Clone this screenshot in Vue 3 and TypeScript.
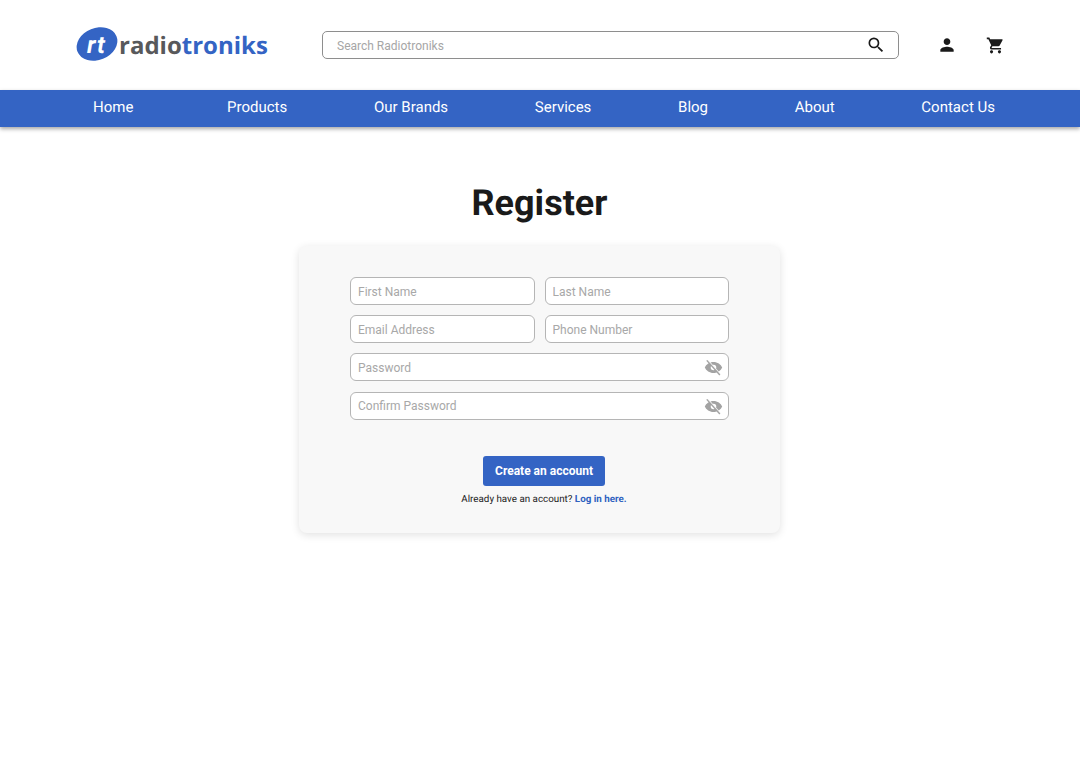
<script setup lang="ts">
const menu = ['Home', 'Products', 'Our Brands', 'Services', 'Blog', 'About', 'Contact Us']
const pairs = [
  ['First Name', 'Last Name'],
  ['Email Address', 'Phone Number'],
]
const secrets = ['Password', 'Confirm Password']
</script>

<template>
  <div class="page">
    <header class="top">
      <a class="logo" href="#">
        <svg class="mark" viewBox="0 0 42 34" width="42" height="34">
          <ellipse cx="21" cy="17" rx="21" ry="16" transform="rotate(-22 21 17)" fill="#3464c4" />
          <text x="11" y="26" class="mark-text">rt</text>
        </svg>
        <span class="word">radio<b>troniks</b></span>
      </a>
      <div class="search">
        <input type="text" placeholder="Search Radiotroniks" />
        <svg viewBox="0 0 24 24" width="20" height="20">
          <path d="M15.500 14h-.79l-.28-.27A6.470 6.470 0 0 0 16 9.500 6.500 6.500 0 1 0 9.500 16c1.610 0 3.090-.59 4.230-1.570l.27.28v.79l5 4.990L20.490 19l-4.990-5zm-6 0C7.010 14 5 11.990 5 9.500S7.010 5 9.500 5 14 7.010 14 9.500 11.990 14 9.500 14z" />
        </svg>
      </div>
      <div class="actions">
        <svg viewBox="0 0 24 24" width="20" height="20">
          <path d="M12 12c2.210 0 4-1.790 4-4s-1.790-4-4-4-4 1.790-4 4 1.790 4 4 4zm0 2c-2.670 0-8 1.340-8 4v2h16v-2c0-2.660-5.330-4-8-4z" />
        </svg>
        <svg viewBox="0 0 24 24" width="19" height="19">
          <path d="M7 18c-1.100 0-1.990.9-1.990 2S5.900 22 7 22s2-.9 2-2-.9-2-2-2zM1 2v2h2l3.600 7.590-1.350 2.450c-.160.280-.250.610-.250.960 0 1.100.9 2 2 2h12v-2H7.420c-.140 0-.250-.110-.250-.250l.030-.120.9-1.630h7.450c.750 0 1.410-.410 1.750-1.030l3.580-6.490A1 1 0 0 0 20 4H5.210l-.940-2H1zm16 16c-1.100 0-1.990.9-1.990 2s.890 2 1.990 2 2-.9 2-2-.9-2-2-2z" />
        </svg>
      </div>
    </header>

    <nav class="menu">
      <a v-for="item in menu" :key="item" href="#">{{ item }}</a>
    </nav>

    <main class="content">
      <h1>Register</h1>
      <form class="card" @submit.prevent>
        <div v-for="(row, i) in pairs" :key="i" class="row">
          <input v-for="name in row" :key="name" type="text" :placeholder="name" />
        </div>
        <div v-for="name in secrets" :key="name" class="secret">
          <input type="password" :placeholder="name" />
          <svg viewBox="0 0 24 24" width="19" height="19">
            <path d="M12 5C7 5 2.700 8.100 1 12c1.700 3.900 6 7 11 7s9.300-3.100 11-7c-1.700-3.900-6-7-11-7zm0 10.500a3.500 3.500 0 1 1 0-7 3.500 3.500 0 0 1 0 7z" />
            <path class="gap" d="M4.800 2.800l16 18" />
            <path class="slash" d="M3.500 3l16.500 18.500" />
          </svg>
        </div>
        <button type="submit">Create an account</button>
        <p class="login">Already have an account? <a href="#">Log in here.</a></p>
      </form>
    </main>
  </div>
</template>

<style>
html,
body {
  margin: 0;
  background: #fff;
}
</style>

<style scoped>
.page {
  font-family: Roboto, "Liberation Sans", sans-serif;
  text-rendering: geometricPrecision;
  min-height: 768px;
  background: #fff;
}
.top {
  height: 90px;
  box-sizing: border-box;
  padding-left: 76px;
  display: flex;
  align-items: center;
}
.logo {
  display: flex;
  align-items: center;
  width: 246px;
  text-decoration: none;
}
.mark {
  flex: none;
  margin-top: -2px;
}
.mark-text {
  fill: #fff;
  font: italic 700 24px Roboto, sans-serif;
  letter-spacing: 1px;
}
.word {
  margin-left: 1px;
  font: 700 24px "Open Sans", sans-serif;
  color: #58595b;
}
.word b {
  font-weight: 700;
  color: #3464c4;
}
.search {
  width: 577px;
  height: 28px;
  box-sizing: border-box;
  border: 1px solid #8e8e8e;
  border-radius: 5px;
  display: flex;
  align-items: center;
  padding: 0 12px 0 14px;
}
.search input {
  flex: 1;
  border: 0;
  outline: 0;
  padding: 1px 0 0;
  font: 12px Roboto, sans-serif;
  background: transparent;
}
.search input::placeholder {
  color: #a6a6a6;
}
.search svg {
  fill: #1a1a1a;
}
.actions {
  display: flex;
  align-items: center;
  gap: 29px;
  margin-left: 38px;
  fill: #1a1a1a;
}
.menu {
  height: 37px;
  box-sizing: border-box;
  padding: 0 0 3px 93px;
  background: #3464c4;
  box-shadow: 0 2px 4px rgba(0, 0, 0, 0.35);
  display: flex;
  align-items: center;
  gap: 86.700px;
}
.menu a {
  color: #fff;
  font-size: 15px;
  text-decoration: none;
}
.menu a:first-child {
  margin-right: 7px;
}
.content {
  display: flex;
  flex-direction: column;
  align-items: center;
}
h1 {
  margin: 54px 0 21px -1px;
  font-size: 36px;
  line-height: 44px;
  font-weight: 700;
  color: #1a1a1a;
}
.card {
  width: 481px;
  height: 287px;
  box-sizing: border-box;
  margin-left: -1px;
  padding: 31px 51px 0;
  background: #f8f8f8;
  border-radius: 8px;
  box-shadow: 0 2px 8px rgba(0, 0, 0, 0.12);
  display: flex;
  flex-direction: column;
  align-items: stretch;
}
.row {
  display: grid;
  grid-template-columns: 1fr 1fr;
  gap: 10px;
  margin-bottom: 10.200px;
}
input {
  font-family: Roboto, sans-serif;
}
.card input {
  width: 100%;
  height: 28px;
  box-sizing: border-box;
  border: 1px solid #b5b5b5;
  border-radius: 6px;
  background: #fff;
  padding: 1px 7px 0;
  font-size: 12px;
  outline: 0;
}
.card input::placeholder {
  color: #a8a8a8;
}
.secret {
  position: relative;
  margin-bottom: 10.200px;
}
.secret svg {
  position: absolute;
  right: 6px;
  top: 5px;
  fill: #a3a3a3;
}
.gap {
  fill: none;
  stroke: #f8f8f8;
  stroke-width: 1.500;
}
.slash {
  fill: none;
  stroke: #a3a3a3;
  stroke-width: 1.800;
}
button {
  align-self: center;
  margin: 26px 0 0 9px;
  width: 122px;
  height: 30px;
  border: 0;
  border-radius: 3px;
  background: #3464c4;
  color: #fff;
  font: 700 12px Roboto, sans-serif;
}
.login {
  margin: 8px 0 0 9px;
  text-align: center;
  font-size: 9.800px;
  line-height: 12px;
  color: #222;
}
.login a {
  color: #2f62c0;
  font-weight: 700;
  text-decoration: none;
}
</style>
